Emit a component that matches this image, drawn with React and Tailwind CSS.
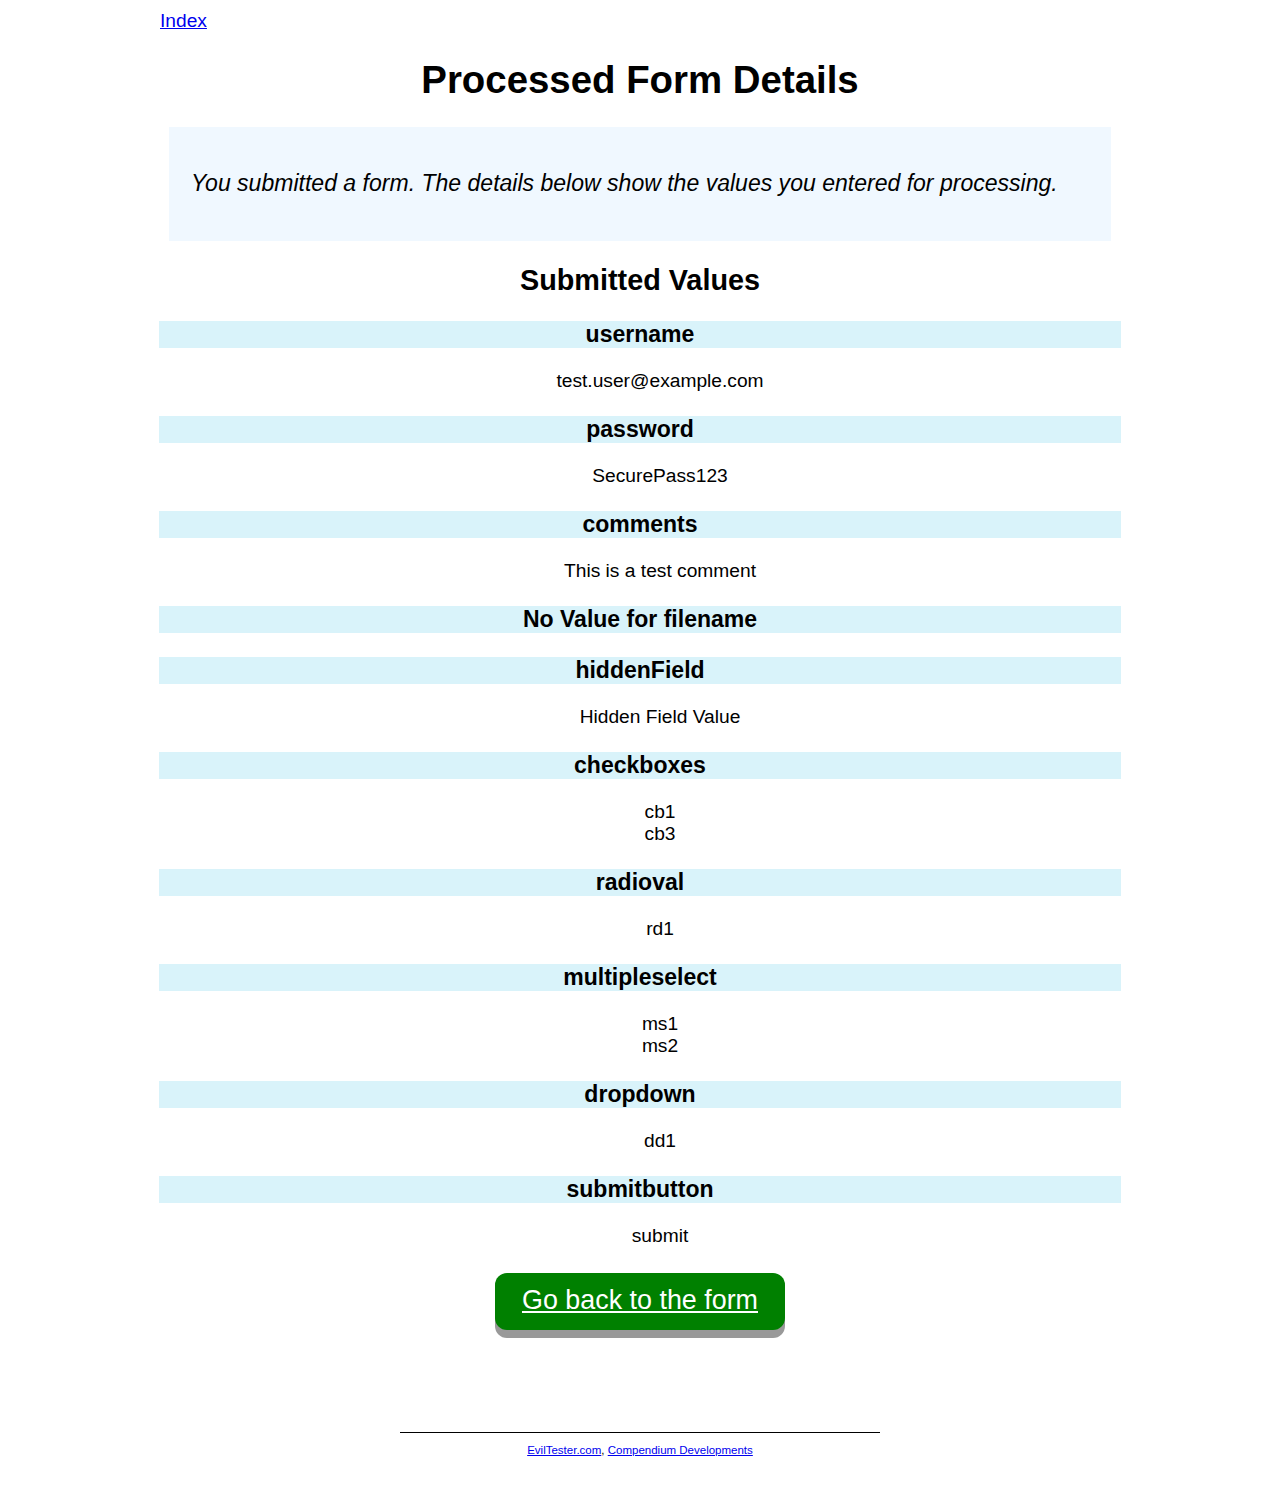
import React from 'react';

const fields = [
  { name: 'username', values: ['test.user@example.com'] },
  { name: 'password', values: ['SecurePass123'] },
  { name: 'comments', values: ['This is a test comment'] },
  { name: 'No Value for filename', values: [] },
  { name: 'hiddenField', values: ['Hidden Field Value'] },
  { name: 'checkboxes', values: ['cb1', 'cb3'] },
  { name: 'radioval', values: ['rd1'] },
  { name: 'multipleselect', values: ['ms1', 'ms2'] },
  { name: 'dropdown', values: ['dd1'] },
  { name: 'submitbutton', values: ['submit'] },
];

const App = () => {
  return (
    <div className="min-h-[1495px] bg-white text-black font-['Liberation_Sans',Arial,sans-serif] text-[19.2px]">
      <div className="w-[962px] mx-auto pt-[7px]">
        <a href="#" className="ml-px text-[#0000ee] underline leading-[22px]">Index</a>

        <h1 className="mt-[22px] text-center text-[38.4px] font-bold leading-[44px]">Processed Form Details</h1>

        <div className="mx-[10px] mt-[25px] bg-[#f0f8ff] pl-[22px] pr-[10px] pt-[43px] pb-[44px]">
          <p className="italic text-[23.04px] leading-[27px]">
            You submitted a form. The details below show the values you entered for processing.
          </p>
        </div>

        <h2 className="mt-[22px] text-center text-[28.8px] font-bold leading-[34px]">Submitted Values</h2>

        <dl className="mt-[24px]">
          {fields.map((f) => (
            <div key={f.name} className="mb-[24px]">
              <dt className="bg-[#d9f3fa] text-center text-[23.04px] font-bold leading-[27px]">{f.name}</dt>
              {f.values.length > 0 && (
                <dd className="pt-[22px] pl-[40px] text-center leading-[22px]">
                  {f.values.map((v) => (
                    <div key={v}>{v}</div>
                  ))}
                </dd>
              )}
            </div>
          ))}
        </dl>

        <div className="flex justify-center pt-[2px]">
          <a
            href="#"
            className="bg-[#008000] text-white underline text-[26.88px] leading-[31px] px-[27px] pt-[12px] pb-[14px] rounded-[12px] shadow-[0_8px_0_#999999]"
          >
            Go back to the form
          </a>
        </div>

        <div className="mt-[102px] mx-auto w-[480px] border-t border-black" />
        <p className="mt-[10px] text-center text-[11.5px] leading-[14px]">
          <a href="#" className="text-[#0000ee] underline">EvilTester.com</a>,{' '}
          <a href="#" className="text-[#0000ee] underline">Compendium Developments</a>
        </p>
      </div>
    </div>
  );
};

export default App;
